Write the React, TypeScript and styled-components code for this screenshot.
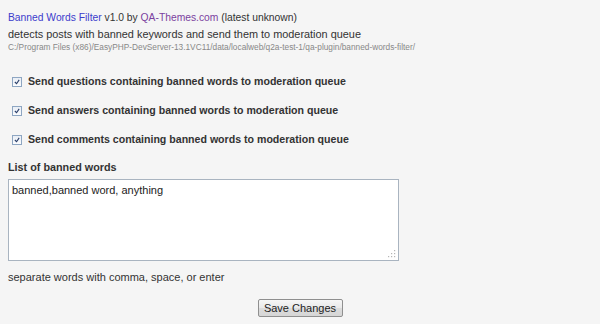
import React from "react";
import styled, { createGlobalStyle } from "styled-components";

const Global = createGlobalStyle`
  html, body { margin: 0; padding: 0; background: #f5f5f5; }
  body { font-family: "Liberation Sans", Arial, sans-serif; color: #333; }
`;

const Page = styled.div`
  width: 600px;
  height: 324px;
  box-sizing: border-box;
  padding: 10px 8px 0 8px;
  background: #f5f5f5;
  display: flex;
  flex-direction: column;
`;

const Header = styled.div`
  display: flex;
  flex-direction: column;
  font-size: 10.9px;
  line-height: 16px;
  color: #333;
`;

const Title = styled.div`
  font-size: 10.3px;
`;

const Link = styled.a<{ $visited?: boolean }>`
  color: ${(p) => (p.$visited ? "#7b3fa0" : "#3c3ccc")};
  text-decoration: none;
`;

const Path = styled.div`
  font-size: 8.3px;
  line-height: 11px;
  color: #888;
  margin-top: 0px;
`;

const Options = styled.div`
  display: flex;
  flex-direction: column;
  gap: 16px;
  margin-top: 22px;
  padding-left: 4px;
`;

const OptionRow = styled.label`
  display: flex;
  align-items: center;
  gap: 6px;
  font-size: 10.6px;
  font-weight: bold;
  line-height: 13px;
  color: #333;
`;

const Check = styled.span`
  width: 8px;
  height: 8px;
  border: 1px solid #8ea6c2;
  background: linear-gradient(#e9eef5, #fbfcfe);
  display: flex;
  align-items: center;
  justify-content: center;
`;

const Section = styled.div`
  display: flex;
  flex-direction: column;
  margin-top: 15px;
`;

const Label = styled.div`
  font-size: 10.8px;
  font-weight: bold;
  line-height: 13px;
  color: #333;
`;

const Area = styled.div`
  margin-top: 5px;
  width: 391px;
  height: 82px;
  box-sizing: border-box;
  border: 1px solid #a9b4c0;
  background: #fff;
  padding: 4px 3px;
  font-size: 11px;
  line-height: 13px;
  color: #222;
  position: relative;
`;

const Grip = styled.svg`
  position: absolute;
  right: 2px;
  bottom: 2px;
`;

const Hint = styled.div`
  margin-top: 10px;
  font-size: 11px;
  line-height: 13px;
  color: #333;
`;

const Footer = styled.div`
  display: flex;
  justify-content: center;
  margin-top: 15px;
  margin-left: -8px;
  margin-right: -8px;
`;

const Button = styled.button`
  width: 85px;
  height: 18px;
  padding: 0;
  font-family: "Liberation Sans", Arial, sans-serif;
  font-size: 11px;
  color: #222;
  border: 1px solid #8f8f8f;
  border-radius: 2px;
  background: linear-gradient(#f6f6f6 0%, #e9e9e9 50%, #dcdcdc 51%, #d6d6d6 100%);
`;

const CheckMark = () => (
  <svg width="6" height="6" viewBox="0 0 7 7">
    <path d="M1 3.5 L3 5.5 L6 1" fill="none" stroke="#2a3f6a" strokeWidth="1.3" />
  </svg>
);

const options = [
  "Send questions containing banned words to moderation queue",
  "Send answers containing banned words to moderation queue",
  "Send comments containing banned words to moderation queue",
];

export default function App() {
  return (
    <>
      <Global />
      <Page>
        <Header>
          <Title>
            <Link href="#">Banned Words Filter</Link> v1.0 by{" "}
            <Link href="#" $visited>
              QA-Themes.com
            </Link>{" "}
            (latest unknown)
          </Title>
          <div>detects posts with banned keywords and send them to moderation queue</div>
          <Path>C:/Program Files (x86)/EasyPHP-DevServer-13.1VC11/data/localweb/q2a-test-1/qa-plugin/banned-words-filter/</Path>
        </Header>
        <Options>
          {options.map((o) => (
            <OptionRow key={o}>
              <Check>
                <CheckMark />
              </Check>
              {o}
            </OptionRow>
          ))}
        </Options>
        <Section>
          <Label>List of banned words</Label>
          <Area>
            banned,banned word, anything
            <Grip width="8" height="8" viewBox="0 0 8 8">
              <g fill="#b5b5b5">
                <rect x="6" y="0" width="1.2" height="1.2" />
                <rect x="3" y="3" width="1.2" height="1.2" />
                <rect x="6" y="3" width="1.2" height="1.2" />
                <rect x="0" y="6" width="1.2" height="1.2" />
                <rect x="3" y="6" width="1.2" height="1.2" />
                <rect x="6" y="6" width="1.2" height="1.2" />
              </g>
            </Grip>
          </Area>
          <Hint>separate words with comma, space, or enter</Hint>
        </Section>
        <Footer>
          <Button>Save Changes</Button>
        </Footer>
      </Page>
    </>
  );
}
